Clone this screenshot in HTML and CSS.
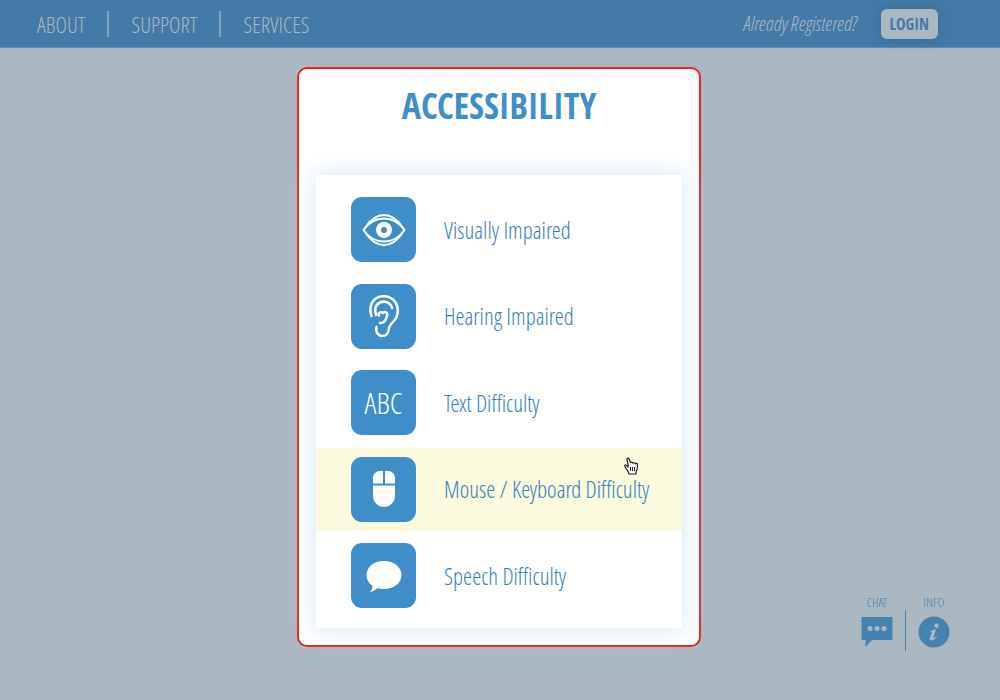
FILE: index.html
```html
<!DOCTYPE html>
<html lang="en">
<head>
<meta charset="utf-8">
<meta name="viewport" content="width=device-width, initial-scale=1">
<title>Accessibility</title>
<link rel="stylesheet" href="styles.css">
</head>
<body>
<header class="topbar">
  <nav class="nav">
    <a class="nav-link" href="#about">ABOUT</a>
    <a class="nav-link" href="#support">SUPPORT</a>
    <a class="nav-link" href="#services">SERVICES</a>
  </nav>
  <div class="account">
    <span class="registered">Already Registered?</span>
    <button class="login" type="button">LOGIN</button>
  </div>
</header>

<main class="stage">
  <section class="dialog" role="dialog" aria-labelledby="dialog-title">
    <h1 class="title" id="dialog-title">ACCESSIBILITY</h1>
    <div class="panel">
      <button class="option" type="button">
        <span class="tile">
          <svg class="icon" viewBox="0 0 64 64" fill="none" stroke="#fff" stroke-linecap="round" aria-hidden="true">
            <path d="M11.500 32C17 24 24 20.500 32 20.500S47 24 52.500 32C47 40.500 40 43.500 32 43.500S17 40.500 11.500 32Z" stroke-width="2"/>
            <path d="M13 30C24 12.500 40 12.500 51 30M13 34C24 51.500 40 51.500 51 34" stroke-width="2"/>
            <circle cx="32" cy="32" r="5.500" stroke-width="5"/>
          </svg>
        </span>
        <span class="label">Visually Impaired</span>
      </button>
      <button class="option" type="button">
        <span class="tile">
          <svg class="icon" viewBox="0 0 64 64" fill="none" stroke="#fff" stroke-width="2.500" stroke-linecap="round" stroke-linejoin="round" aria-hidden="true">
            <path d="M19.500 32C17.500 27 18 20 22 16C27 11 36 11 41 15.500C46 20 47 27 44.500 33C42.500 38 37.500 40 37 44C36.500 49 34.500 52 30.500 52C26.500 52 23.500 49 24.500 43"/>
            <path d="M24 31C22 26 23.500 20.500 28 18.500C33 16.300 38.500 18.500 40 24"/>
            <path d="M27 31.500C25.500 29 28.500 27.500 31 29C33.500 27 36 28.500 35 32C34 36 31.500 39.500 28 39"/>
          </svg>
        </span>
        <span class="label">Hearing Impaired</span>
      </button>
      <button class="option" type="button">
        <span class="tile tile-text" aria-hidden="true">ABC</span>
        <span class="label">Text Difficulty</span>
      </button>
      <button class="option option-active" type="button">
        <span class="tile">
          <svg class="icon" viewBox="0 0 64 64" fill="#fff" aria-hidden="true">
            <path d="M31 14V26.500H21V21C21 17 24 14 28 14ZM33 14H36C40 14 43 17 43 21V26.500H33ZM21 28.500H43V39C43 45 38 50 32 50S21 45 21 39Z"/>
          </svg>
        </span>
        <span class="label">Mouse / Keyboard Difficulty</span>
        <svg class="pointer" viewBox="0 0 14 18" aria-hidden="true">
          <path d="M4.500 10.500L2.500 8.300C1.200 7.300.2 8.500 1 9.800L3.500 13.500C4.300 14.800 4.800 15.500 5 17H12V15C12.800 13.500 13.400 12 13.400 10V7.500C13.400 6.300 12 6 11.300 6.800C11 5.600 9.500 5.300 8.800 6.200C8.300 5.100 7.200 4.900 6.500 5.600L5.200 2C4.700.5 2.700.8 3 2.500L4.500 9" fill="#fff" stroke="#222" stroke-width="1.200" stroke-linejoin="round"/>
          <path d="M6.500 10V14M8.500 10V14M10.500 10V14" stroke="#222"/>
        </svg>
      </button>
      <button class="option" type="button">
        <span class="tile">
          <svg class="icon" viewBox="0 0 64 64" fill="#fff" aria-hidden="true">
            <path d="M32 17C42 17 49.500 23 49.500 31S42 45 32 45C29.500 45 27.500 44.700 25.500 44C23.500 46 21 47.500 18 48C19.500 46.500 20.500 44.500 20.500 42C16.500 39.500 14.500 35.500 14.500 31C14.500 23 22 17 32 17Z"/>
          </svg>
        </span>
        <span class="label">Speech Difficulty</span>
      </button>
    </div>
  </section>
</main>

<aside class="help">
  <button class="help-item" type="button">
    <span>CHAT</span>
    <svg class="help-icon" viewBox="0 0 32 32" aria-hidden="true">
      <path d="M.5 1H31.500V24H11L4.500 31V24H.5Z" fill="#4682b0"/>
      <circle cx="9" cy="12.500" r="2.500" fill="#abb8c2"/><circle cx="16" cy="12.500" r="2.500" fill="#abb8c2"/><circle cx="23" cy="12.500" r="2.500" fill="#abb8c2"/>
    </svg>
  </button>
  <button class="help-item" type="button">
    <span>INFO</span>
    <svg class="help-icon" viewBox="0 0 32 32" aria-hidden="true">
      <circle cx="16" cy="16" r="15.500" fill="#4682b0"/>
      <circle cx="18.500" cy="9.800" r="2.200" fill="#abb8c2"/>
      <path d="M12.500 15.500C14 14 15.500 13.600 18 13.600L15.500 21.500C15.200 22.700 16.500 22 18.500 20.200L19 20.800C17 23.500 15.500 24.500 13.500 24.500C11.800 24.500 11.400 23.300 11.900 21.800L13.700 16.200C13.900 15.400 13.500 15.600 12.800 16Z" fill="#abb8c2"/>
    </svg>
  </button>
</aside>
</body>
</html>
```
FILE: styles.css
```css
* {
  box-sizing: border-box;
}

body {
  margin: 0;
  min-height: 100vh;
  background: #abb8c2;
  font-family: "Open Sans Condensed Light", "Open Sans Light Condensed", "Liberation Sans Narrow", "Liberation Sans", sans-serif;
}

button {
  border: 0;
  padding: 0;
  background: none;
  font: inherit;
  color: inherit;
  cursor: pointer;
}

.topbar {
  display: flex;
  align-items: center;
  justify-content: space-between;
  height: 48px;
  padding: 0 62px 0 37px;
  background: #437aa8;
  border-bottom: 1px solid #5f8db3;
  color: #abb8c2;
}

.nav {
  display: flex;
}

.nav-link {
  color: inherit;
  font-size: 22px;
  font-weight: 300;
  line-height: 26px;
  text-decoration: none;
}

.nav-link + .nav-link {
  margin-left: 22px;
  padding-left: 22px;
  border-left: 2px solid #86a2b9;
}

.account {
  display: flex;
  align-items: center;
  gap: 24px;
}

.registered {
  font-size: 20px;
  font-style: italic;
  font-weight: 300;
}

.login {
  padding: 4px 9px;
  border-radius: 6px;
  background: #abb8c2;
  box-shadow: 0 0 12px rgba(50, 90, 125, 0.5);
  color: #437aa8;
  font-family: "Open Sans Condensed", "Liberation Sans Narrow", sans-serif;
  font-size: 16px;
  font-weight: 700;
  line-height: 22px;
}

.stage {
  display: flex;
  justify-content: center;
  padding: 19px 16px;
}

.dialog {
  width: 100%;
  max-width: 404px;
  margin-right: 2px;
  padding: 17px;
  border: 2px solid #ec2227;
  border-radius: 10px;
  background: #fff;
}

.title {
  margin: 0 0 50px;
  color: #408ec9;
  font-family: "Open Sans Condensed", "Liberation Sans Narrow", sans-serif;
  font-size: 36px;
  font-weight: 700;
  line-height: 39px;
  text-align: center;
}

.panel {
  display: flex;
  flex-direction: column;
  justify-content: space-between;
  min-height: 453px;
  padding: 13px 0 11px;
  box-shadow: 0 0 22px #cce5f4;
}

.option {
  position: relative;
  display: flex;
  align-items: center;
  gap: 28px;
  padding: 9px 35px;
  color: #367fbd;
  font-size: 23px;
  font-weight: 300;
  text-align: left;
  white-space: nowrap;
}

.option-active {
  background: #fbf9de;
}

.tile {
  display: flex;
  align-items: center;
  justify-content: center;
  flex: none;
  width: 65px;
  height: 65px;
  border-radius: 11px;
  background: #408ec9;
}

.tile-text {
  color: #fff;
  font-size: 30px;
}

.icon {
  width: 64px;
  height: 64px;
}

.pointer {
  position: absolute;
  top: 9px;
  right: 44px;
  width: 14px;
  height: 18px;
}

.help {
  position: fixed;
  right: 50px;
  bottom: 52px;
  display: flex;
  color: #4682b0;
  font-size: 13px;
  line-height: 14px;
}

.help-item {
  display: flex;
  flex-direction: column;
  align-items: center;
  gap: 7px;
}

.help-item + .help-item {
  position: relative;
  margin-left: 25px;
}

.help-item + .help-item::before {
  content: "";
  position: absolute;
  top: 15px;
  left: -13px;
  width: 1px;
  height: 41px;
  background: #4682b0;
}

.help-icon {
  width: 32px;
  height: 32px;
}
```
